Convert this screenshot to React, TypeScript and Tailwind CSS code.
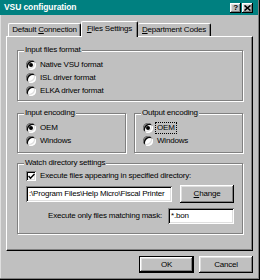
import React from 'react'

const raised =
  'shadow-[inset_-1px_-1px_0_#000,inset_1px_1px_0_#fff,inset_-2px_-2px_0_#808080,inset_2px_2px_0_#dfdfdf]'
const sunken =
  'shadow-[inset_1px_1px_0_#808080,inset_-1px_-1px_0_#fff,inset_2px_2px_0_#000,inset_-2px_-2px_0_#dfdfdf]'

function Radio({ checked, label, focus }: { checked?: boolean; label: React.ReactNode; focus?: boolean }) {
  return (
    <div className="flex items-center h-[13px]">
      <div className={`w-[10px] h-[10px] rounded-full bg-white flex items-center justify-center ${sunken}`}>
        {checked && <div className="w-[4px] h-[4px] rounded-full bg-black" />}
      </div>
      <span className={`ml-[3px] leading-none px-[1px] py-[1px] ${focus ? 'outline outline-1 outline-dotted outline-black' : ''}`}>
        {label}
      </span>
    </div>
  )
}

function Group({ label, className, children }: { label: string; className: string; children: React.ReactNode }) {
  return (
    <div
      className={`relative border border-[#808080] shadow-[inset_1px_1px_0_#fff,1px_1px_0_#fff] ${className}`}
    >
      <span className="absolute -top-[5px] left-[6px] px-[1px] bg-[#c0c0c0] leading-none">{label}</span>
      {children}
    </div>
  )
}

function Button({ children, className, isDefault }: { children: React.ReactNode; className: string; isDefault?: boolean }) {
  return (
    <div
      className={`flex items-center justify-center bg-[#c0c0c0] leading-none ${
        isDefault ? 'border border-black' : ''
      } ${className}`}
    >
      <div className={`w-full h-full flex items-center justify-center ${raised}`}>{children}</div>
    </div>
  )
}

export default function App() {
  return (
    <div
      className="w-[260px] h-[280px] bg-[#c0c0c0] flex flex-col overflow-hidden text-black text-[8px] tracking-[-0.2px] font-['Liberation_Sans',Arial,sans-serif] shadow-[inset_-1px_-1px_0_#000,inset_-2px_-2px_0_#808080,inset_1px_0_0_#dfdfdf]"
    >
      {/* Title bar */}
      <div className="w-[258px] h-[15px] bg-[#008080] flex items-center pl-[4px] pr-[5px] shrink-0">
        <span className="text-white font-bold text-[8.5px] tracking-[-0.1px] leading-none">VSU configuration</span>
        <div className="ml-auto flex gap-[1px]">
          <div className={`w-[11px] h-[10px] bg-[#c0c0c0] flex items-center justify-center ${raised}`}>
            <span className="font-bold text-[8px] leading-none">?</span>
          </div>
          <div className={`w-[11px] h-[10px] bg-[#c0c0c0] flex items-center justify-center ${raised}`}>
            <svg width="7" height="6" viewBox="0 0 7 6">
              <path d="M0.5 0.5 L6.5 5.5 M6.5 0.5 L0.5 5.5" stroke="#000" strokeWidth="1.6" />
            </svg>
          </div>
        </div>
      </div>

      {/* Tabs */}
      <div className="h-[21px] flex items-end pl-[8px] shrink-0">
        <div className="w-[73px] h-[13px] flex items-center justify-center border-t border-l border-r border-t-white border-l-white border-r-black rounded-t-[2px] shadow-[inset_-1px_0_0_#808080] leading-none">
          <span>
            Default <span className="underline">C</span>onnection
          </span>
        </div>
        <div className="relative z-10 w-[57px] h-[16px] -mb-[1px] bg-[#c0c0c0] flex items-start pt-[3px] justify-center border-t border-l border-r border-t-white border-l-white border-r-black rounded-t-[2px] shadow-[inset_-1px_0_0_#808080] leading-none">
          <span>
            <span className="underline">F</span>iles Settings
          </span>
        </div>
        <div className="w-[73px] h-[13px] flex items-center justify-center border-t border-r border-t-white border-r-black rounded-t-[2px] shadow-[inset_-1px_0_0_#808080] leading-none">
          <span>
            <span className="underline">D</span>epartment Codes
          </span>
        </div>
      </div>

      {/* Panel */}
      <div className="ml-[6px] w-[247px] h-[215px] shrink-0 border border-t-white border-l-white border-r-black border-b-black shadow-[inset_-1px_-1px_0_#808080] pl-[10px] pt-[13px] flex flex-col">
        <Group label="Input files format" className="w-[226px] h-[51px] pt-[7px] pl-[8px]">
          <Radio checked label="Native VSU format" />
          <Radio label="ISL driver format" />
          <Radio label="ELKA driver format" />
        </Group>

        <div className="flex gap-[8px] mt-[12px]">
          <Group label="Input encoding" className="w-[109px] h-[40px] pt-[7px] pl-[8px]">
            <Radio checked label="OEM" />
            <Radio label="Windows" />
          </Group>
          <Group label="Output encoding" className="w-[109px] h-[40px] pt-[7px] pl-[8px]">
            <Radio checked focus label="OEM" />
            <Radio label="Windows" />
          </Group>
        </div>

        <Group label="Watch directory settings" className="w-[226px] h-[71px] mt-[10px] pt-[6px] pl-[8px] pr-[8px]">
          <div className="flex items-center h-[12px]">
            <div className={`w-[10px] h-[10px] bg-white flex items-center justify-center ${sunken}`}>
              <svg width="7" height="7" viewBox="0 0 7 7">
                <path d="M0.5 3 L2.5 5.2 L6.5 1" stroke="#000" strokeWidth="1.5" fill="none" />
              </svg>
            </div>
            <span className="ml-[4px] leading-none">Execute files appearing in specified directory:</span>
          </div>
          <div className="flex items-center mt-[3px]">
            <div className={`w-[146px] h-[16px] bg-white flex items-center pl-[3px] overflow-hidden whitespace-nowrap leading-none ${sunken}`}>
              :\Program Files\Help Micro\Fiscal Printer
            </div>
            <Button className="w-[54px] h-[18px] ml-[8px]">
              <span>
                <span className="underline">C</span>hange
              </span>
            </Button>
          </div>
          <div className="flex items-center justify-end mt-[5px]">
            <span className="leading-none">Execute only files matching mask:</span>
            <div className={`w-[66px] h-[16px] ml-[6px] bg-white flex items-center pl-[3px] leading-none ${sunken}`}>
              *.bon
            </div>
          </div>
        </Group>
      </div>

      {/* Dialog buttons */}
      <div className="flex justify-end gap-[5px] pr-[7px] mt-[5px]">
        <Button isDefault className="w-[55px] h-[17px]">
          OK
        </Button>
        <Button className="w-[54px] h-[17px]">Cancel</Button>
      </div>
    </div>
  )
}
